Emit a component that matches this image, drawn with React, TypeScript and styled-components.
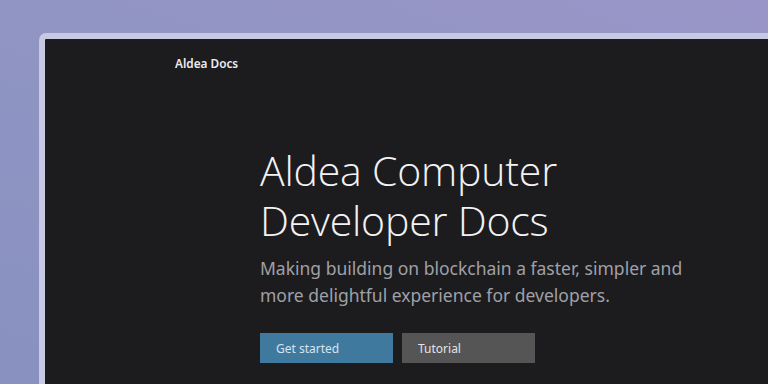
import styled, { createGlobalStyle } from 'styled-components'

const GlobalStyle = createGlobalStyle`
  html, body {
    margin: 0;
    padding: 0;
    overflow: hidden;
  }
  body {
    background: #8f93c2;
  }
`

const Stage = styled.div`
  width: 768px;
  height: 384px;
  overflow: hidden;
  box-sizing: border-box;
  padding: 33px 0 0 39px;
  background: linear-gradient(200deg, #9a95c8 0%, #9095c3 45%, #8891c0 100%);
`

const Frame = styled.div`
  height: 400px;
  box-sizing: border-box;
  border: 6px solid #c7c8e1;
  border-right: none;
  border-bottom: none;
  border-radius: 7px 0 0 0;
  background: #1c1c1f;
  font-family: 'Noto Sans', sans-serif;
`

const Header = styled.header`
  display: flex;
  align-items: center;
  height: 48px;
  padding-left: 130px;
`

const Brand = styled.div`
  font-size: 11.8px;
  font-weight: 600;
  color: #ececef;
`

const Hero = styled.section`
  display: flex;
  flex-direction: column;
  padding: 58px 0 0 215px;
`

const Title = styled.h1`
  margin: 0;
  font-family: 'Open Sans', sans-serif;
  font-weight: 300;
  font-size: 41px;
  line-height: 50px;
  color: #f2f2f4;
  letter-spacing: -0.2px;
`

const Lead = styled.p`
  margin: 10px 0 0;
  font-size: 17.5px;
  line-height: 27px;
  color: #a0a0a6;
  max-width: 440px;
`

const Actions = styled.div`
  display: flex;
  gap: 9px;
  margin-top: 24px;
`

const Button = styled.button<{ $tone: 'primary' | 'secondary' }>`
  width: 133px;
  height: 30px;
  border: none;
  padding: 0 0 0 16px;
  text-align: left;
  font-family: 'Noto Sans', sans-serif;
  font-size: 12px;
  color: ${(p) => (p.$tone === 'primary' ? '#d6e4ee' : '#e4e4e6')};
  background: ${(p) => (p.$tone === 'primary' ? '#3f7a9e' : '#555556')};
  cursor: pointer;
`

export default function App() {
  return (
    <Stage>
      <GlobalStyle />
      <Frame>
        <Header>
          <Brand>Aldea Docs</Brand>
        </Header>
        <Hero>
          <Title>
            Aldea Computer
            <br />
            Developer Docs
          </Title>
          <Lead>
            Making building on blockchain a faster, simpler and more delightful experience for
            developers.
          </Lead>
          <Actions>
            <Button $tone="primary">Get started</Button>
            <Button $tone="secondary">Tutorial</Button>
          </Actions>
        </Hero>
      </Frame>
    </Stage>
  )
}
